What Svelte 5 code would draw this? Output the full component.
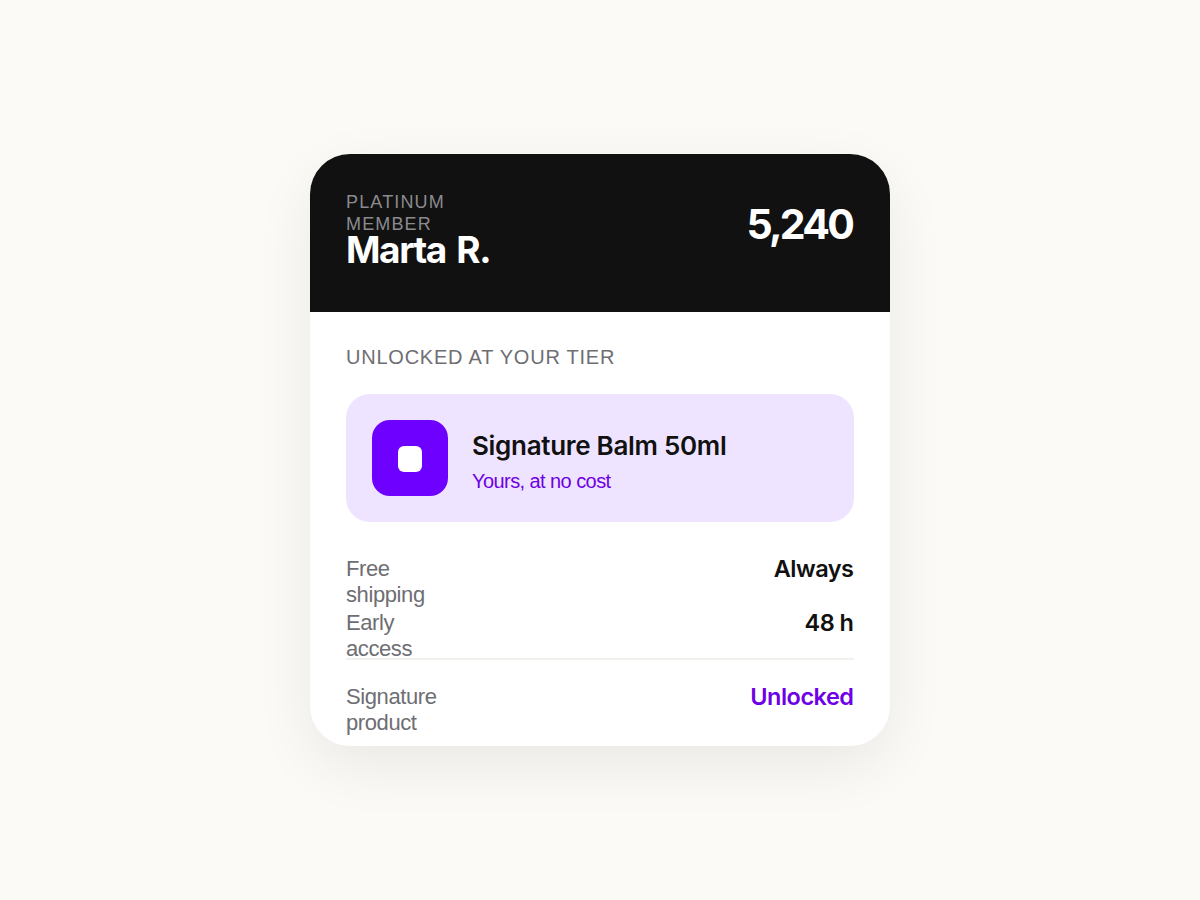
<script>
    let { tier = "Platinum member", name = "Marta R.", points = "5,240" } = $props();

    let perks = [
        { label: "Free shipping", value: "Always" },
        { label: "Early access", value: "48 h" },
        { label: "Signature product", value: "Unlocked", divider: true, accent: true },
    ];
</script>

<main class="page">
    <section class="card">
        <header class="header">
            <div class="member">
                <div class="tier">{tier}</div>
                <div class="name">{name}</div>
            </div>
            <div class="points">{points}</div>
        </header>

        <div class="body">
            <div class="heading">Unlocked at your tier</div>

            <div class="reward">
                <div class="icon"><div class="icon__dot"></div></div>
                <div class="reward__text">
                    <div class="reward__title">Signature Balm 50ml</div>
                    <div class="reward__note">Yours, at no cost</div>
                </div>
            </div>

            <div class="perks">
                {#each perks as perk}
                    <div class="perk" class:perk--divider={perk.divider}>
                        <div class="perk__label">{perk.label}</div>
                        <div class="perk__value" class:accent={perk.accent}>{perk.value}</div>
                    </div>
                {/each}
            </div>
        </div>
    </section>
</main>

<style>
    :global(body) {
        background: #fbfaf6;
    }

    .page {
        display: flex;
        align-items: center;
        justify-content: center;
        height: 900px;
        font-family: "Liberation Sans", Arial, sans-serif;
        color: #111111;
    }

    .card {
        width: 580px;
        height: 592px;
        overflow: hidden;
        border-radius: 40px;
        background: #ffffff;
        box-shadow: 0 20px 60px rgba(17, 17, 17, 0.07);
    }

    .header {
        display: flex;
        justify-content: space-between;
        box-sizing: border-box;
        height: 158px;
        padding: 37px 36px 0;
        background: #111111;
        color: #ffffff;
    }

    .tier {
        width: 120px;
        font-size: 18px;
        line-height: 22px;
        letter-spacing: 1.15px;
        text-transform: uppercase;
        color: #8a8a8f;
    }

    .name {
        margin-top: -7px;
        font-family: Inter, sans-serif;
        font-size: 37px;
        line-height: 44px;
        font-weight: 700;
        letter-spacing: -1.4px;
        word-spacing: 3px;
        white-space: nowrap;
    }

    .points {
        padding-top: 8px;
        margin-right: 2px;
        font-family: Inter, sans-serif;
        font-size: 41px;
        line-height: 50px;
        font-weight: 700;
        letter-spacing: -2.8px;
    }

    .body {
        padding: 33px 36px 0;
    }

    .heading {
        font-size: 20px;
        line-height: 24px;
        letter-spacing: 0.77px;
        text-transform: uppercase;
        color: #6e6e73;
    }

    .reward {
        display: flex;
        align-items: center;
        gap: 24px;
        box-sizing: border-box;
        height: 128px;
        margin-top: 25px;
        padding: 0 26px;
        border-radius: 24px;
        background: #efe4ff;
    }

    .icon {
        display: flex;
        align-items: flex-start;
        justify-content: center;
        box-sizing: border-box;
        width: 76px;
        height: 76px;
        padding-top: 26px;
        border-radius: 18px;
        background: #6e00ff;
    }

    .icon__dot {
        width: 24px;
        height: 26px;
        border-radius: 6px;
        background: #ffffff;
    }

    .reward__text {
        padding-top: 6px;
    }

    .reward__title {
        font-family: Inter, sans-serif;
        font-size: 26px;
        line-height: 32px;
        font-weight: 600;
        letter-spacing: -0.3px;
        white-space: nowrap;
    }

    .reward__note {
        margin-top: 7px;
        font-size: 20px;
        line-height: 24px;
        letter-spacing: -0.57px;
        color: #6e00e6;
    }

    .perks {
        padding-top: 34px;
    }

    .perk {
        display: flex;
        justify-content: space-between;
        height: 54px;
    }

    .perk:nth-child(2) {
        height: 48px;
    }

    .perk--divider {
        padding-top: 24px;
        border-top: 2px solid #f0f0ec;
    }

    .perk__label {
        width: 100px;
        font-size: 22px;
        line-height: 26px;
        letter-spacing: -0.4px;
        color: #6e6e73;
    }

    .perk__value {
        margin-right: 0.5px;
        font-family: Inter, sans-serif;
        font-size: 23.5px;
        line-height: 26px;
        font-weight: 600;
        letter-spacing: -0.5px;
        white-space: nowrap;
    }

    .accent {
        color: #6e00e6;
    }
</style>
